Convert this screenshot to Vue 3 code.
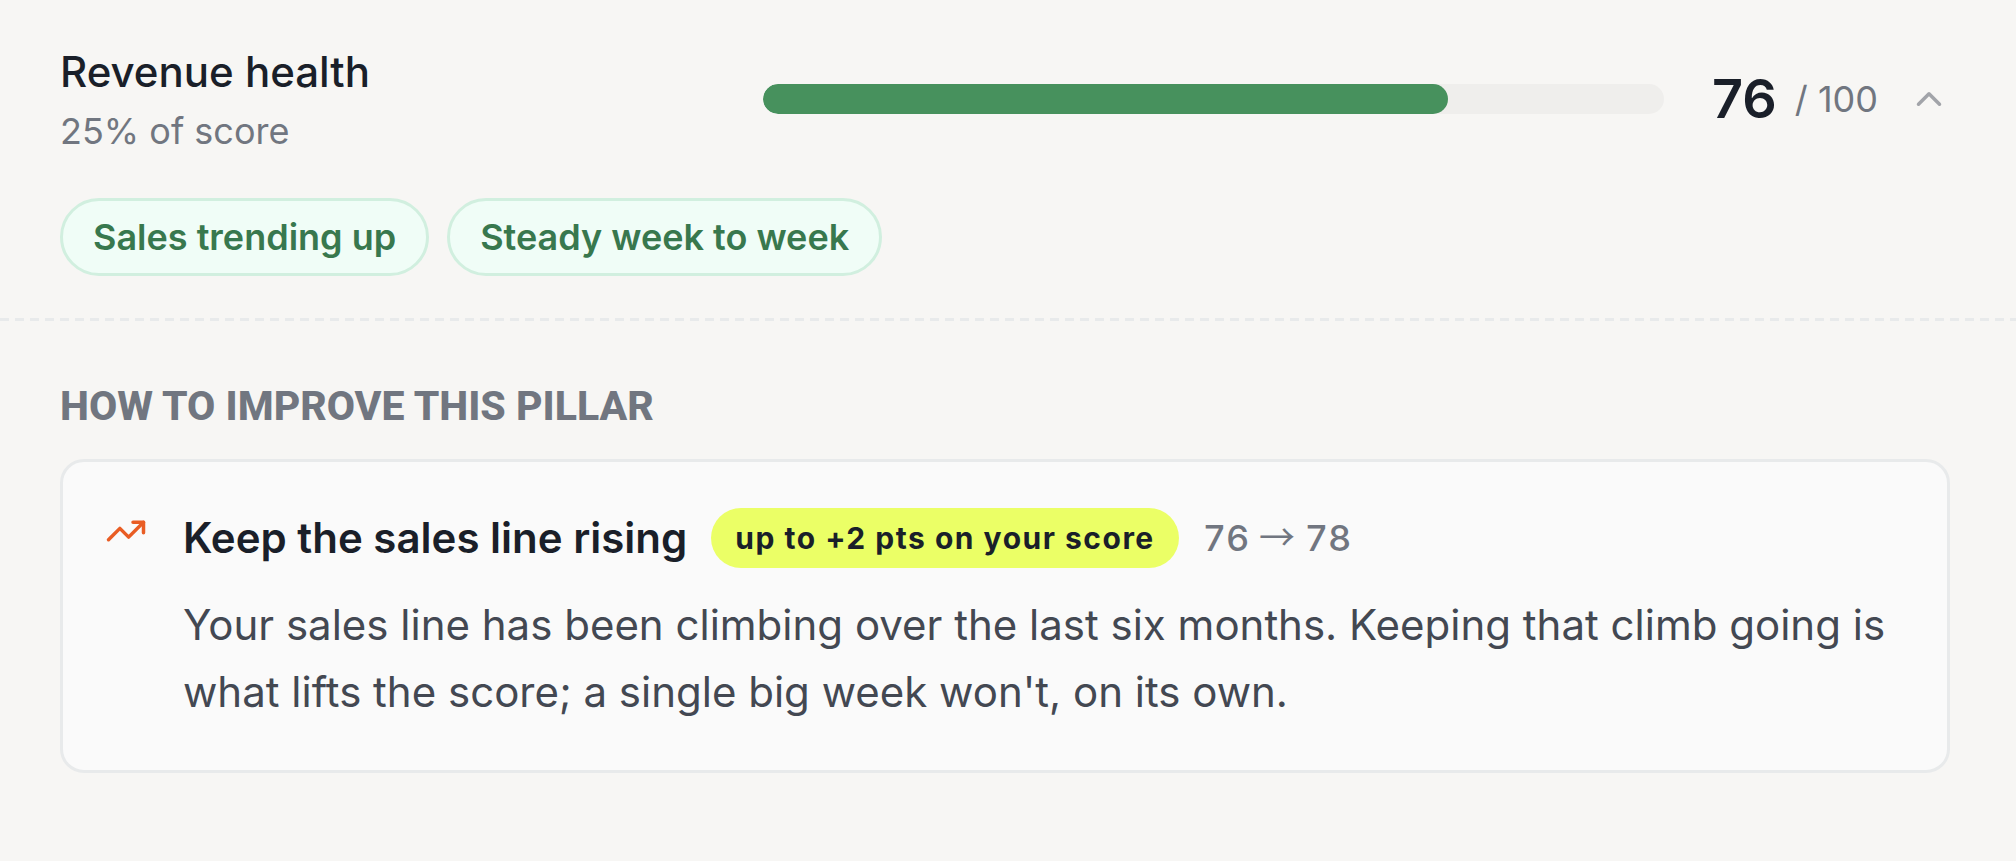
<script setup>
import { ref } from 'vue'

const score = 76
const open = ref(true)
const signals = ['Sales trending up', 'Steady week to week']
</script>

<template>
  <section class="pillar">
    <header class="summary">
      <div class="label">
        <h2 id="pillar-name" class="name">Revenue health</h2>
        <p class="weight">25% of score</p>
      </div>
      <div class="track" role="progressbar" aria-labelledby="pillar-name" aria-valuemin="0" aria-valuemax="100" :aria-valuenow="score">
        <div class="fill" :style="{ width: score + '%' }"></div>
      </div>
      <p class="score"><strong>{{ score }}</strong><span>/ 100</span></p>
      <button class="toggle" type="button" aria-label="Toggle details" :aria-expanded="open" @click="open = !open">
        <svg viewBox="0 0 24 24" aria-hidden="true"><path d="m18 15-6-6-6 6" /></svg>
      </button>
    </header>

    <ul class="chips">
      <li v-for="signal in signals" :key="signal" class="chip">{{ signal }}</li>
    </ul>

    <div v-if="open" class="details">
      <h3 class="heading">HOW TO IMPROVE THIS PILLAR</h3>
      <article class="card">
        <svg class="trend" viewBox="0 0 24 24" aria-hidden="true">
          <path d="M22 7 13.5 15.5 8.5 10.5 2 17" />
          <path d="M16 7h6v6" />
        </svg>
        <div class="content">
          <div class="row">
            <h4 class="title">Keep the sales line rising</h4>
            <span class="gain">up to +2 pts on your score</span>
            <span class="change">76 <span class="arrow">→</span> 78</span>
          </div>
          <p class="text">Your sales line has been climbing over the last six months. Keeping that climb going is what lifts the score; a single big week won't, on its own.</p>
        </div>
      </article>
    </div>
  </section>
</template>

<style>
body {
  background: #f7f6f4;
}
</style>

<style scoped>
.pillar {
  font-family: Inter, "Liberation Sans", sans-serif;
  font-optical-sizing: none;
  color: #1a1f29;
}
h2, h3, h4, p, ul {
  margin: 0;
  padding: 0;
}
.summary {
  display: grid;
  grid-template-columns: 703fr 901fr auto auto;
  align-items: center;
  padding: 42px 66px 0 60px;
}
.name {
  font-size: 42px;
  font-weight: 500;
  line-height: 60px;
}
.weight {
  margin-top: 5px;
  font-size: 36px;
  line-height: 48px;
  color: #717680;
}
.track {
  height: 30px;
  border-radius: 15px;
  background: #efeeec;
  overflow: hidden;
}
.fill {
  height: 100%;
  border-radius: 15px;
  background: #47915d;
}
.score {
  display: flex;
  align-items: center;
  gap: 18px;
  margin-left: 48px;
  line-height: 66px;
  white-space: nowrap;
}
.score strong {
  font-size: 54px;
  font-weight: 600;
}
.score span {
  font-size: 36px;
  color: #717680;
}
.toggle {
  display: flex;
  margin-left: 30px;
  padding: 0;
  border: 0;
  background: none;
  cursor: pointer;
}
.toggle svg {
  width: 42px;
  height: 42px;
  fill: none;
  stroke: #a2a4a9;
  stroke-width: 2;
  stroke-linecap: round;
  stroke-linejoin: round;
}
.chips {
  display: flex;
  flex-wrap: wrap;
  gap: 18px;
  padding: 43px 66px 42px 60px;
  list-style: none;
}
.chip {
  padding: 0 30px;
  border: 3px solid #d1efdf;
  border-radius: 39px;
  background: #f0fdf7;
  color: #38784e;
  font-size: 36px;
  font-weight: 600;
  line-height: 72px;
}
.details {
  padding: 66px 66px 60px 60px;
  background: repeating-linear-gradient(90deg, #e8eaeb 0 9px, transparent 9px 15px) 0 0 / 100% 3px no-repeat;
}
.heading {
  font-family: Roboto, Inter, sans-serif;
  font-size: 41px;
  font-weight: 800;
  line-height: 44px;
  color: #717680;
}
.card {
  display: flex;
  gap: 36px;
  margin-top: 31px;
  padding: 46px 42px 45px;
  border: 3px solid #e8eaeb;
  border-radius: 24px;
  background: #fafafa;
}
.trend {
  flex: none;
  width: 42px;
  height: 42px;
  margin-top: 2px;
  fill: none;
  stroke: #e95d24;
  stroke-width: 2;
  stroke-linecap: round;
  stroke-linejoin: round;
}
.row {
  display: flex;
  flex-wrap: wrap;
  align-items: center;
  gap: 24px;
}
.title {
  font-size: 42px;
  font-weight: 600;
  line-height: 60px;
}
.gain {
  padding: 0 24px;
  border-radius: 30px;
  background: #ebff66;
  font-size: 30px;
  font-weight: 700;
  letter-spacing: 0.05em;
  line-height: 60px;
}
.change {
  font-size: 36px;
  font-weight: 500;
  font-variant-numeric: tabular-nums;
  line-height: 60px;
  color: #717680;
}
.arrow {
  font-family: "Noto Sans CJK SC", sans-serif;
  font-weight: 400;
  line-height: 1;
}
.text {
  margin-top: 23px;
  font-size: 42px;
  line-height: 67px;
  color: #434852;
}
</style>
